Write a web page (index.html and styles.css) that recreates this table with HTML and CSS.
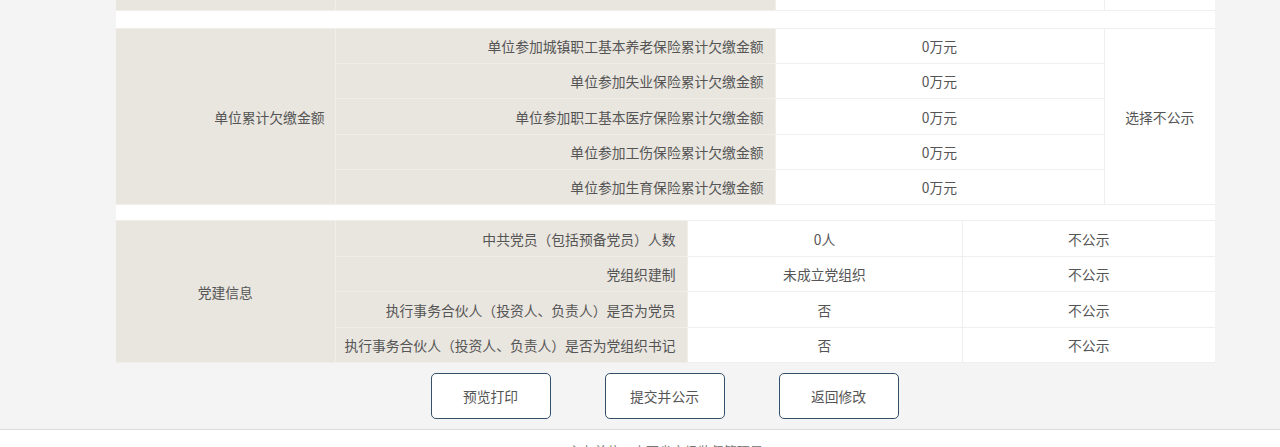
FILE: index.html
```html
<!DOCTYPE html>
<html lang="zh-CN">
<head>
<meta charset="utf-8">
<title>年报公示</title>
<link rel="stylesheet" href="styles.css">
</head>
<body>
<div class="page">
  <div class="main">
    <table class="grid grid-a prev">
      <colgroup><col class="c1"><col class="c2"><col class="c3"><col class="c4"></colgroup>
      <tr class="r36">
        <td class="lab"></td>
        <td class="sub sub-up">单位缴费总额</td>
        <td class="val"></td>
        <td class="val"></td>
      </tr>
    </table>
    <div class="gap g18"></div>
    <table class="grid grid-a">
      <colgroup><col class="c1"><col class="c2"><col class="c3"><col class="c4"></colgroup>
      <tr class="r35">
        <td class="lab lab-shift" rowspan="5">单位累计欠缴金额</td>
        <td class="sub">单位参加城镇职工基本养老保险累计欠缴金额</td>
        <td class="val">0万元</td>
        <td class="val" rowspan="5">选择不公示</td>
      </tr>
      <tr class="r35"><td class="sub">单位参加失业保险累计欠缴金额</td><td class="val">0万元</td></tr>
      <tr class="r36"><td class="sub">单位参加职工基本医疗保险累计欠缴金额</td><td class="val">0万元</td></tr>
      <tr class="r35"><td class="sub">单位参加工伤保险累计欠缴金额</td><td class="val">0万元</td></tr>
      <tr class="r35"><td class="sub">单位参加生育保险累计欠缴金额</td><td class="val">0万元</td></tr>
    </table>
    <div class="gap g16"></div>
    <table class="grid grid-b">
      <colgroup><col class="d1"><col class="d2"><col class="d3"><col class="d4"></colgroup>
      <tr class="r36">
        <td class="lab" rowspan="4">党建信息</td>
        <td class="sub">中共党员（包括预备党员）人数</td>
        <td class="val">0人</td>
        <td class="val">不公示</td>
      </tr>
      <tr class="r35"><td class="sub">党组织建制</td><td class="val">未成立党组织</td><td class="val">不公示</td></tr>
      <tr class="r36"><td class="sub">执行事务合伙人（投资人、负责人）是否为党员</td><td class="val">否</td><td class="val">不公示</td></tr>
      <tr class="r35"><td class="sub">执行事务合伙人（投资人、负责人）是否为党组织书记</td><td class="val">否</td><td class="val">不公示</td></tr>
    </table>
  </div>
  <div class="actions-bar">
    <div class="actions">
      <button class="btn" type="button">预览打印</button>
      <button class="btn" type="button">提交并公示</button>
      <button class="btn" type="button">返回修改</button>
    </div>
  </div>
</div>
<footer class="footer"><div class="footer-inner">主办单位：山西省市场监督管理局</div></footer>
</body>
</html>
```

FILE: styles.css
```css
html, body {
  margin: 0;
  padding: 0;
}
body {
  background: #f5f4f4;
  font-family: "Noto Sans CJK SC", "Noto Sans", sans-serif;
  font-size: 13.8px;
  color: #555;
  overflow: hidden;
}
.page {
  margin-top: -26px;
}
.main {
  margin-left: 116px;
  width: 1099px;
  background: #fff;
}
.grid {
  width: 1099px;
  border-collapse: collapse;
  table-layout: fixed;
}
.grid td {
  padding: 0;
  border: 1px solid #efefef;
  line-height: 18px;
  white-space: nowrap;
}
.c1 { width: 219px; }
.c2 { width: 440px; }
.c3 { width: 329px; }
.c4 { width: 111px; }
.d1 { width: 219px; }
.d2 { width: 352px; }
.d3 { width: 275px; }
.d4 { width: 253px; }
.r35 { height: 35px; }
.r36 { height: 36px; }
.grid .lab {
  background: #e9e5df;
  text-align: center;
  border-color: #f1eee9;
  border-left: 0;
}
.grid .lab-shift {
  text-align: right;
  padding-right: 10px;
}
.grid .sub {
  background: #e9e5df;
  text-align: right;
  padding-right: 11px;
  border-color: #f1eee9;
}
.grid .sub-up {
  padding-bottom: 1px;
  padding-right: 54px;
}
.grid .val {
  text-align: center;
  background: #fff;
}
.grid td:last-child {
  border-right: 0;
}
.gap {
  background: #fff;
}
.g18 { height: 17px; }
.g16 { height: 15px; }
.actions-bar {
  border-bottom: 1px solid #dcdcdc;
}
.actions {
  margin-left: 115px;
  width: 1099px;
  display: flex;
  justify-content: center;
  gap: 54px;
  padding: 10px 0;
}
.btn {
  width: 120px;
  height: 46px;
  background: #fff;
  border: 1px solid #34506a;
  border-radius: 5px;
  font-family: "Noto Sans CJK SC", "Noto Sans", sans-serif;
  font-size: 13.8px;
  color: #555;
  padding: 0;
}
.footer {
  background: #fff;
  height: 60px;
}
.footer-inner {
  margin-left: 116px;
  width: 1099px;
  text-align: center;
  font-size: 13px;
  color: #777;
  padding-top: 11px;
}
```
